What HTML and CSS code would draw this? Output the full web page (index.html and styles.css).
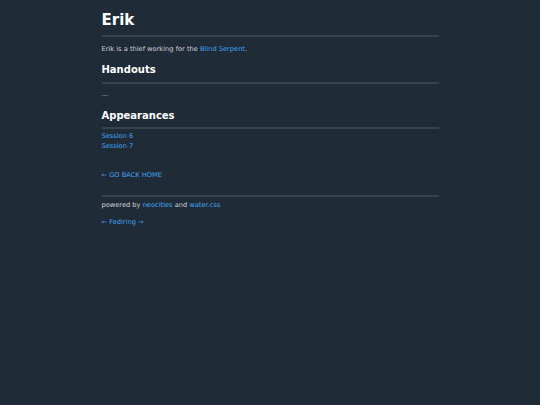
FILE: index.html
```html
<!DOCTYPE html>
<html lang="en">
<head>
<meta charset="utf-8">
<title>Erik</title>
<link rel="stylesheet" href="styles.css">
</head>
<body>
<main class="page">
  <h1 class="title">Erik</h1>
  <hr class="rule rule-title">
  <p class="text">Erik is a thief working for the <a href="#">Blind Serpent</a>.</p>
  <h2 class="section section-first">Handouts</h2>
  <hr class="rule rule-handouts">
  <p class="text">...</p>
  <h2 class="section section-second">Appearances</h2>
  <hr class="rule rule-appearances">
  <ul class="list">
    <li><a href="#">Session 6</a></li>
    <li><a href="#">Session 7</a></li>
  </ul>
  <p class="back"><a href="#">← GO BACK HOME</a></p>
  <footer class="footer">
    <hr class="rule rule-footer">
    <p class="text powered">powered by <a href="#">neocities</a> and <a href="#">water.css</a></p>
    <p class="text ring"><a href="#">← Fediring →</a></p>
  </footer>
</main>
</body>
</html>
```

FILE: styles.css
```css
html, body {
  margin: 0;
  padding: 0;
  background: #202b38;
}
body {
  font-family: "DejaVu Sans", sans-serif;
  color: #d0d2d4;
  font-size: 6.67px;
  line-height: 10px;
}
.page {
  width: 337px;
  margin: 0 auto;
  padding-top: 11px;
}
a {
  color: #41a5f5;
  text-decoration: none;
}
.title {
  font-size: 15px;
  line-height: 19px;
  margin: 0;
  color: #fff;
  font-weight: bold;
}
.section {
  font-size: 10px;
  line-height: 14px;
  margin: 0;
  color: #fff;
  font-weight: bold;
}
.section-first {
  margin-top: 9px;
}
.section-second {
  margin-top: 10px;
}
.rule {
  border: none;
  border-top: 2px solid #36434f;
  height: 0;
  margin: 0;
}
.rule-title {
  margin: 5px 0 7px;
}
.rule-handouts {
  margin: 5px 0 5px;
}
.rule-appearances {
  margin: 4px 0 2px;
}
.rule-footer {
  margin: 0 0 3px;
}
.text {
  margin: 0;
}
.list {
  list-style: none;
  margin: 0;
  padding: 0;
}
.back {
  margin: 19px 0 0;
}
.footer {
  margin-top: 15px;
}
.ring {
  margin-top: 7px;
}
```
